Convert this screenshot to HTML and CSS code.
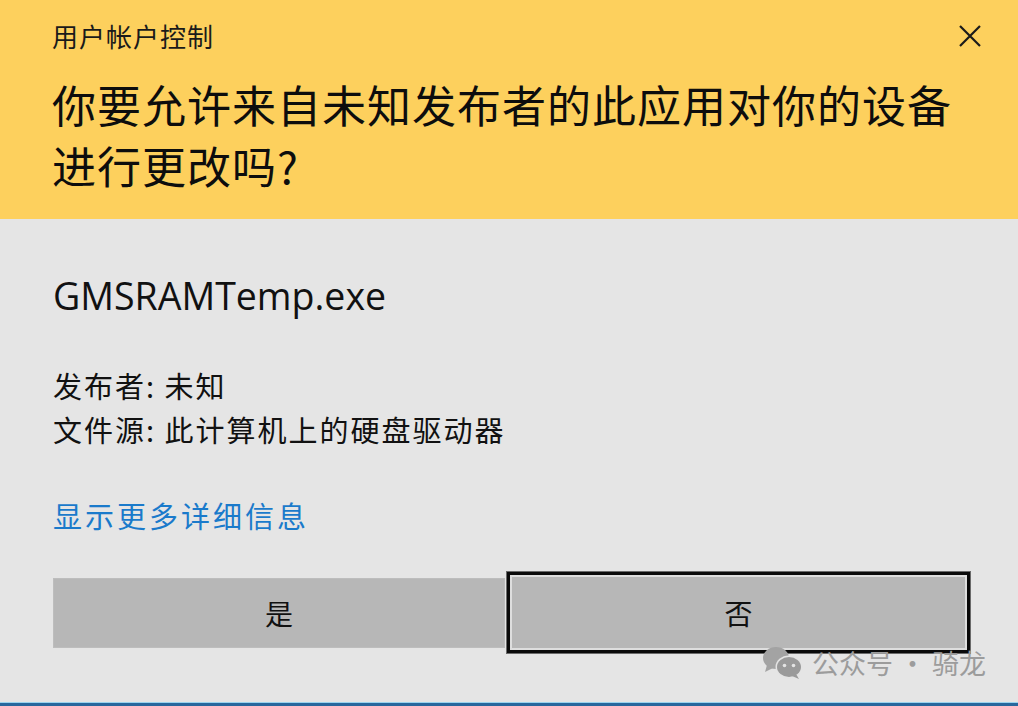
FILE: index.html
```html
<!DOCTYPE html>
<html lang="zh-CN">
<head>
<meta charset="utf-8">
<title>用户帐户控制</title>
<link rel="stylesheet" href="styles.css">
</head>
<body>
<div class="dialog">
  <header class="header">
    <div class="titlebar">
      <span class="title">用户帐户控制</span>
      <svg class="close" width="24" height="24" viewBox="0 0 24 24" aria-hidden="true">
        <path d="M2 2 L22 22 M22 2 L2 22" stroke="#1a1a1a" stroke-width="2.2" fill="none"/>
      </svg>
    </div>
    <h1 class="question">你要允许来自未知发布者的此应用对你的设备进行更改吗?</h1>
  </header>
  <main class="content">
    <div class="appname">GMSRAMTemp.exe</div>
    <div class="details">
      <div>发布者: 未知</div>
      <div>文件源: 此计算机上的硬盘驱动器</div>
    </div>
    <a class="more">显示更多详细信息</a>
    <div class="buttons">
      <button class="btn yes">是</button>
      <button class="btn no">否</button>
    </div>
  </main>
  <div class="watermark">
    <svg width="42" height="34" viewBox="0 0 42 34" aria-hidden="true">
      <ellipse cx="14" cy="12" rx="13" ry="11" fill="#a3a3a3"/>
      <path d="M5 19 L3 26 L11 22 Z" fill="#a3a3a3"/>
      <ellipse cx="27" cy="21" rx="13.5" ry="11.5" fill="#e4e4e4"/>
      <ellipse cx="27" cy="21" rx="12" ry="10" fill="#9a9a9a"/>
      <path d="M34 28 L37 33 L30 30 Z" fill="#9a9a9a"/>
      <circle cx="22.5" cy="19.5" r="1.8" fill="#e4e4e4"/>
      <circle cx="31.5" cy="19.5" r="1.8" fill="#e4e4e4"/>
    </svg>
    <span>公众号 · 骑龙</span>
  </div>
</div>
</body>
</html>
```

FILE: styles.css
```css
* { box-sizing: border-box; }
html, body {
  margin: 0;
  padding: 0;
  width: 1018px;
  height: 706px;
  overflow: hidden;
  background: #e5e5e5;
  font-family: "Noto Sans CJK SC", "Noto Sans", sans-serif;
  color: #111;
}
.dialog {
  position: relative;
  width: 1018px;
  height: 706px;
  display: flex;
  flex-direction: column;
}
.header {
  background: #fdd05d;
  height: 219px;
  padding: 16px 36px 0 52px;
}
.titlebar {
  display: flex;
  justify-content: space-between;
  align-items: center;
  height: 40px;
}
.title {
  font-size: 26px;
  line-height: 40px;
  color: #1a1a1a;
  letter-spacing: 1px;
}
.question {
  margin: 18px 0 0 0;
  width: 910px;
  font-size: 44px;
  font-weight: normal;
  line-height: 61px;
  letter-spacing: 1px;
  color: #0d0d0d;
}
.content {
  flex: 1;
  padding: 52px 47px 0 53px;
  border-bottom: 3px solid #27679d;
  box-shadow: inset 0 -1px 0 #9bd3ee;
}
.appname {
  font-family: "Open Sans", "Noto Sans", sans-serif;
  font-size: 37.5px;
  line-height: 50px;
  color: #111;
}
.details {
  margin-top: 42px;
  font-size: 29px;
  line-height: 44px;
  letter-spacing: 2px;
}
.more {
  display: block;
  margin-top: 42px;
  font-size: 29px;
  line-height: 44px;
  letter-spacing: 3px;
  color: #1a7acb;
}
.buttons {
  margin-top: 34px;
  display: flex;
  align-items: center;
  gap: 1px;
}
.btn {
  font-family: "Noto Sans CJK SC", sans-serif;
  font-size: 28px;
  color: #111;
  background: #b7b7b7;
  padding: 0;
}
.yes {
  width: 452px;
  height: 70px;
  border: 1px solid #bdbdbd;
}
.no {
  width: 465px;
  height: 83px;
  border: 4px solid #0a0a0a;
  box-shadow: inset 0 0 0 2px #dedede;
  outline: 1px solid #6a6a6a;
  outline-offset: -1px;
}
.watermark {
  position: absolute;
  left: 762px;
  top: 646px;
  display: flex;
  align-items: center;
  gap: 8px;
  color: #9c9c9c;
  font-size: 27px;
  line-height: 34px;
}
```
